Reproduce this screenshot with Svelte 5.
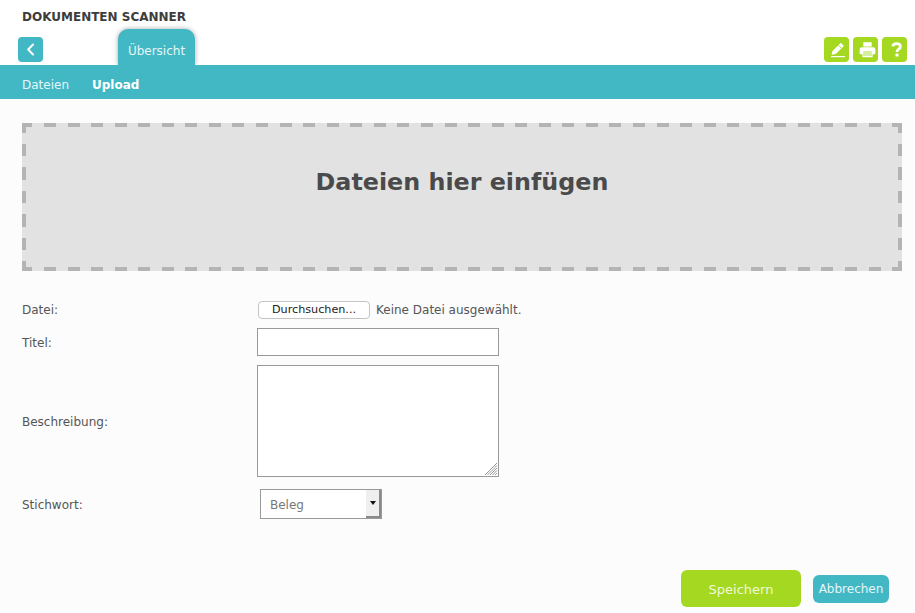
<script>
  let title = $state('');
  let description = $state('');
</script>

<div class="page">
  <header class="header">
    <h1 class="title">DOKUMENTEN SCANNER</h1>
    <div class="toolbar">
      <button class="back" aria-label="Zurück">
        <svg width="25" height="25" viewBox="0 0 25 25"><path d="M15 7.5 L10.2 12.5 L15 17.5" fill="none" stroke="#fff" stroke-width="2" stroke-linecap="round" stroke-linejoin="round"/></svg>
      </button>
      <div class="tab">Übersicht</div>
      <div class="actions">
        <button class="icon" aria-label="Bearbeiten">
          <svg width="25" height="25" viewBox="0 0 25 25">
            <path d="M7.5 17.8 L8.5 14 L16 6.4 Q16.8 5.7 17.5 6.4 L19.4 8.3 Q20 9 19.4 9.6 L11.8 17 Z" fill="#fff"/>
            <path d="M14.2 8.2 L17.6 11.6" stroke="#a5d820" stroke-width="0.8"/>
            <rect x="7" y="19" width="14" height="1.2" fill="#fff"/>
          </svg>
        </button>
        <button class="icon" aria-label="Drucken">
          <svg width="25" height="25" viewBox="0 0 25 25">
            <path d="M10.3 5.2 H18.7 V9.6 H10.3 Z" fill="#fff"/>
            <path fill-rule="evenodd" d="M9 10.2 H20 Q22.4 10.2 22.4 12.4 V16 Q22.4 17.2 21.2 17.2 H19.6 V20.2 H9.4 V17.2 H7.8 Q6.6 17.2 6.6 16 V12.4 Q6.6 10.2 9 10.2 Z M10.6 14.6 V19 H18.4 V14.6 Z" fill="#fff"/>
            <rect x="10.6" y="14.6" width="7.8" height="4.4" fill="#d6eea0"/>
          </svg>
        </button>
        <button class="icon" aria-label="Hilfe">
          <svg width="25" height="25" viewBox="0 0 25 25">
            <path d="M10.8 9.4 Q11.2 6.6 14.6 6.6 Q18.4 6.6 18.4 9.6 Q18.4 11.2 16.6 12.3 Q15 13.2 15 15" fill="none" stroke="#fff" stroke-width="2.8"/>
            <rect x="13.5" y="16.6" width="3" height="3" rx="0.6" fill="#fff"/>
          </svg>
        </button>
      </div>
    </div>
  </header>

  <nav class="subnav">
    <span>Dateien</span>
    <span class="active">Upload</span>
  </nav>

  <main class="content">
    <div class="dropzone">Dateien hier einfügen</div>

    <form class="form">
      <div class="row file-row">
        <span class="label first">Datei:</span>
        <div class="file">
          <button type="button" class="browse">Durchsuchen...</button>
          <span>Keine Datei ausgewählt.</span>
        </div>
      </div>
      <div class="row">
        <label class="label" for="titel">Titel:</label>
        <input id="titel" class="text" bind:value={title} />
      </div>
      <div class="row">
        <label class="label" for="beschreibung">Beschreibung:</label>
        <div class="area-wrap">
          <textarea id="beschreibung" class="area" bind:value={description}></textarea>
          <svg class="grip" width="14" height="14" viewBox="0 0 14 14">
            <path d="M13 1 L1 13 M13 3.5 L3.5 13 M13 6 L6 13 M13 8.5 L8.5 13 M13 11 L11 13" stroke="#8c8c8c" stroke-width="0.9" fill="none"/>
          </svg>
        </div>
      </div>
      <div class="row keyword">
        <span class="label">Stichwort:</span>
        <div class="select">
          <span class="value">Beleg</span>
          <span class="arrow"><i></i></span>
        </div>
      </div>
    </form>

    <div class="buttons">
      <button class="save">Speichern</button>
      <button class="cancel">Abbrechen</button>
    </div>
  </main>
</div>

<style>
  :global(body) {
    margin: 0;
    background: #fcfcfc;
  }
  .page {
    width: 915px;
    height: 613px;
    overflow: hidden;
    display: flex;
    flex-direction: column;
    font-family: "DejaVu Sans", Verdana, sans-serif;
    font-size: 12px;
    color: #555;
  }
  button {
    font-family: inherit;
    border: none;
    padding: 0;
    margin: 0;
  }
  .header {
    background: #fff;
    height: 65px;
    flex: none;
  }
  .title {
    margin: 0;
    padding: 10px 0 0 22px;
    height: 19px;
    line-height: 14px;
    font-size: 12px;
    font-weight: bold;
    color: #3c3c3c;
  }
  .toolbar {
    display: flex;
    align-items: flex-end;
    height: 36px;
    padding: 0 8px 0 18px;
  }
  .back {
    width: 25px;
    height: 25px;
    margin-bottom: 3px;
    border-radius: 4px;
    background: #42b8c5;
    display: flex;
  }
  .tab {
    margin-left: 75px;
    width: 77px;
    height: 36px;
    box-sizing: border-box;
    padding-top: 15px;
    line-height: 14px;
    text-align: center;
    color: #e6f6f8;
    background: #42b8c5;
    border-radius: 10px 10px 0 0;
    box-shadow: 0 0 5px rgba(0, 0, 0, 0.35);
  }
  .actions {
    margin-left: auto;
    display: flex;
    gap: 4px;
    margin-bottom: 3px;
  }
  .icon {
    width: 25px;
    height: 25px;
    border-radius: 4px;
    background: #a5d820;
    display: flex;
  }
  .subnav {
    position: relative;
    height: 34px;
    box-sizing: border-box;
    padding: 6px 0 0 22px;
    flex: none;
    background: #42b8c5;
    display: flex;
    align-items: center;
    gap: 23px;
    color: #e6f6f8;
  }
  .subnav .active {
    font-weight: bold;
    color: #fff;
  }
  .content {
    flex: 1;
    display: flex;
    flex-direction: column;
    padding: 24px 13px 6px 22px;
    min-height: 0;
  }
  .dropzone {
    height: 148px;
    box-sizing: border-box;
    background-color: #e2e2e2;
    background-image:
      repeating-linear-gradient(90deg, #b4b4b4 -1.56px, #b4b4b4 10.44px, transparent 10.44px, transparent 22px),
      repeating-linear-gradient(90deg, #b4b4b4 -1.56px, #b4b4b4 10.44px, transparent 10.44px, transparent 22px),
      repeating-linear-gradient(180deg, #b4b4b4 -2.4px, #b4b4b4 10px, transparent 10px, transparent 21px),
      repeating-linear-gradient(180deg, #b4b4b4 -2.4px, #b4b4b4 10px, transparent 10px, transparent 21px);
    background-size: 100% 4px, 100% 4px, 4px 100%, 4px 100%;
    background-position: 0 0, 0 100%, 0 0, 100% 0;
    background-repeat: no-repeat;
    display: flex;
    align-items: center;
    justify-content: center;
    font-size: 23.8px;
    font-weight: bold;
    color: #4a4a4a;
    padding-bottom: 31px;
  }
  .form {
    margin-top: 29px;
    display: flex;
    flex-direction: column;
    gap: 9px;
  }
  .row {
    display: grid;
    grid-template-columns: 235px auto;
    justify-content: start;
    align-items: center;
  }
  .label {
    color: #555;
    padding-top: 2px;
  }
  .label.first {
    padding-top: 0;
  }
  .file-row {
    margin-bottom: -1px;
    height: 20px;
  }
  .file {
    display: flex;
    align-items: center;
    gap: 6px;
    padding-left: 1px;
  }
  .browse {
    width: 112px;
    height: 18px;
    box-sizing: border-box;
    background: #fff;
    border: 1px solid #c4c4c4;
    border-radius: 4px;
    font-size: 11.2px;
    color: #222;
    line-height: 14px;
  }
  .text,
  .area {
    display: block;
    box-sizing: border-box;
    width: 242px;
    border: 1px solid #999;
    background: #fff;
    margin: 0;
    padding: 2px;
    border-radius: 0;
    outline: none;
    font-family: inherit;
    font-size: 12px;
  }
  .text {
    height: 28px;
  }
  .area {
    height: 112px;
    resize: none;
  }
  .area-wrap {
    position: relative;
    height: 112px;
  }
  .grip {
    position: absolute;
    right: 1px;
    bottom: 1px;
  }
  .keyword {
    margin-top: 3px;
  }
  .select {
    margin-left: 3px;
    width: 122px;
    height: 30px;
    box-sizing: border-box;
    border: 1px solid #999;
    background: #fff;
    display: flex;
    align-items: center;
    justify-content: space-between;
  }
  .value {
    padding: 1px 0 0 9px;
    color: #777;
  }
  .arrow {
    width: 15px;
    height: 28px;
    box-sizing: border-box;
    background: #efefef;
    border-right: 2px solid #8a8a8a;
    border-bottom: 2px solid #8a8a8a;
    display: flex;
    align-items: center;
    justify-content: center;
  }
  .arrow i {
    width: 0;
    height: 0;
    border-left: 3.5px solid transparent;
    border-right: 3.5px solid transparent;
    border-top: 4px solid #111;
  }
  .buttons {
    margin-top: auto;
    display: flex;
    align-items: center;
    justify-content: flex-end;
    gap: 12px;
    margin-right: 13px;
  }
  .save {
    width: 120px;
    height: 37px;
    padding-top: 1px;
    background: #a5d820;
    color: #f0f9d8;
    border-radius: 6px;
    font-size: 13px;
  }
  .cancel {
    width: 76px;
    height: 28px;
    background: #42b8c5;
    color: #e6f6f8;
    border-radius: 6px;
    font-size: 12px;
  }
</style>
